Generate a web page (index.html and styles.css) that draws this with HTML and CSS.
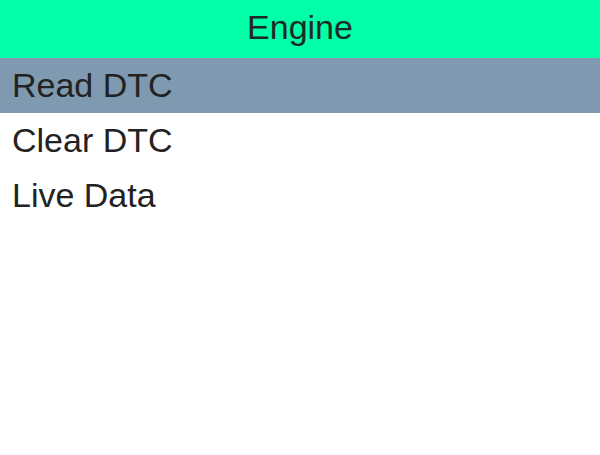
FILE: index.html
```html
<!DOCTYPE html>
<html>
<head>
<meta charset="utf-8">
<link rel="stylesheet" href="styles.css">
</head>
<body>
<div class="screen">
  <div class="header">Engine</div>
  <ul class="menu">
    <li class="item selected">Read DTC</li>
    <li class="item">Clear DTC</li>
    <li class="item">Live Data</li>
  </ul>
</div>
</body>
</html>
```
FILE: styles.css
```css
html, body {
  margin: 0;
  padding: 0;
  background: #ffffff;
}
.screen {
  width: 600px;
  height: 455px;
  font-family: "Liberation Sans", Arial, sans-serif;
  color: #222222;
}
.header {
  height: 55px;
  padding-bottom: 3px;
  background: #00ffa6;
  display: flex;
  align-items: center;
  justify-content: center;
  font-size: 34px;
  color: #1e2a26;
}
.menu {
  list-style: none;
  margin: 0;
  padding: 0;
}
.item {
  height: 55px;
  display: flex;
  align-items: center;
  padding-left: 12px;
  font-size: 34px;
}
.selected {
  background: #7f9ab0;
}
```
